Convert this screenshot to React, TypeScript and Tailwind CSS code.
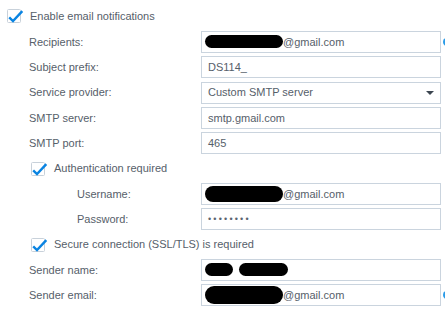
import type { ReactNode } from "react";

const font = { fontFamily: '"Liberation Sans", Arial, sans-serif' };

function Check() {
  return (
    <svg width="17" height="16" viewBox="0 0 17 16" className="shrink-0">
      <rect x="0.5" y="1.5" width="13" height="13" rx="1" fill="#fff" stroke="#c8d1da" />
      <path d="M2.2 9.3 L6 13 L15.3 3.2" fill="none" stroke="#0a84e2" strokeWidth="2.4" />
    </svg>
  );
}

function Blob({ className }: { className: string }) {
  return <span className={"inline-block shrink-0 rounded-full bg-black " + className} />;
}

type FieldProps = {
  label: string;
  indent?: boolean;
  help?: boolean;
  children: ReactNode;
};

function Field({ label, indent, help, children }: FieldProps) {
  return (
    <div className="flex h-[25.33px] items-center">
      <div className={indent ? "w-[201px] shrink-0 pl-[77px]" : "w-[201px] shrink-0 pl-[29px]"}>
        {label}
      </div>
      <div className="flex h-[22px] w-[240px] shrink-0 items-center border border-[#cad4de] px-[6px]">
        {children}
      </div>
      {help && <span className="ml-[2px] h-[8px] w-[8px] shrink-0 rounded-full bg-[#2a9be8]" />}
    </div>
  );
}

function CheckRow({ label, indent }: { label: string; indent?: boolean }) {
  return (
    <div className={indent ? "flex h-[25.33px] items-center pl-[31px]" : "flex h-[29.33px] items-center pl-[7px] pt-[3px]"}>
      <Check />
      <span className="ml-[6px]">{label}</span>
    </div>
  );
}

export default function App() {
  return (
    <div
      className="h-[311px] w-[445px] overflow-hidden bg-white text-[11px] text-[#56606a]"
      style={font}
    >
      <CheckRow label="Enable email notifications" />
      <Field label="Recipients:" help>
        <Blob className="-ml-[3px] h-[13px] w-[78px]" />
        <span>@gmail.com</span>
      </Field>
      <Field label="Subject prefix:">DS114_</Field>
      <Field label="Service provider:">
        <span className="flex-1">Custom SMTP server</span>
        <span className="h-0 w-0 border-x-[4px] border-t-[4px] border-x-transparent border-t-[#3c4650]" />
      </Field>
      <Field label="SMTP server:">smtp.gmail.com</Field>
      <Field label="SMTP port:">465</Field>
      <CheckRow label="Authentication required" indent />
      <Field label="Username:" indent>
        <Blob className="-ml-[3px] h-[16px] w-[78px]" />
        <span>@gmail.com</span>
      </Field>
      <Field label="Password:" indent>
        <span className="text-[9px] tracking-[2.2px] text-[#5a6470]">••••••••</span>
      </Field>
      <CheckRow label="Secure connection (SSL/TLS) is required" indent />
      <Field label="Sender name:">
        <Blob className="-ml-[3px] h-[13px] w-[28px]" />
        <Blob className="ml-[6px] h-[13px] w-[49px]" />
      </Field>
      <Field label="Sender email:" help>
        <Blob className="-ml-[3px] h-[18px] w-[78px]" />
        <span>@gmail.com</span>
      </Field>
    </div>
  );
}
